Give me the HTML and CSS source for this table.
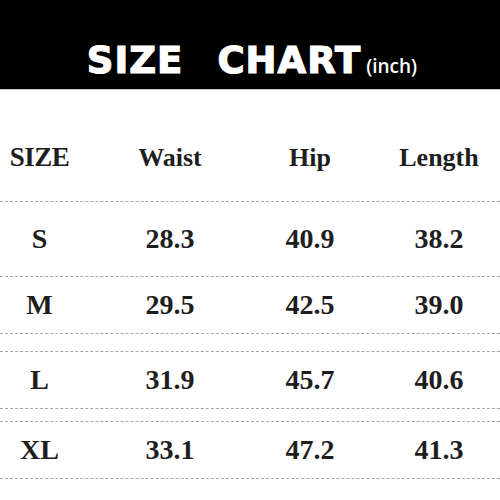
FILE: index.html
```html
<!DOCTYPE html>
<html>
<head>
<meta charset="utf-8">
<link rel="stylesheet" href="styles.css">
</head>
<body>
<div class="page">
  <header class="banner">
    <span class="title">SIZE</span>
    <span class="title title-2">CHART</span>
    <span class="unit">(inch)</span>
  </header>
  <div class="rule-top"></div>
  <div class="table">
    <div class="row head">
      <div class="cell first">SIZE</div>
      <div class="cell">Waist</div>
      <div class="cell">Hip</div>
      <div class="cell">Length</div>
    </div>
    <div class="row r-s">
      <div class="cell first">S</div>
      <div class="cell">28.3</div>
      <div class="cell">40.9</div>
      <div class="cell">38.2</div>
    </div>
    <div class="row r-m">
      <div class="cell first">M</div>
      <div class="cell">29.5</div>
      <div class="cell">42.5</div>
      <div class="cell">39.0</div>
    </div>
    <div class="spacer s1"></div>
    <div class="row r-l">
      <div class="cell first">L</div>
      <div class="cell">31.9</div>
      <div class="cell">45.7</div>
      <div class="cell">40.6</div>
    </div>
    <div class="spacer s2"></div>
    <div class="row r-xl">
      <div class="cell first">XL</div>
      <div class="cell">33.1</div>
      <div class="cell">47.2</div>
      <div class="cell">41.3</div>
    </div>
  </div>
</div>
</body>
</html>
```

FILE: styles.css
```css
html, body {
  margin: 0;
  padding: 0;
  background: #fff;
}
.page {
  width: 500px;
  height: 500px;
  overflow: hidden;
  background: #fff;
}
.banner {
  height: 89px;
  background: #000;
  display: flex;
  justify-content: center;
  align-items: baseline;
  box-sizing: border-box;
  padding-top: 42px;
  padding-left: 4px;
  color: #fff;
  font-family: "DejaVu Sans", sans-serif;
}
.title {
  font-size: 37px;
  font-weight: 700;
  line-height: 37px;
  letter-spacing: 1px;
  -webkit-text-stroke: 1.2px #fff;
}
.title-2 {
  margin-left: 34px;
}
.unit {
  font-family: "Open Sans", sans-serif;
  font-size: 19px;
  font-weight: 600;
  margin-left: 5px;
}
.rule-top {
  height: 1px;
  background: #c8c8c8;
}
.table {
  font-family: "Liberation Serif", serif;
  font-weight: 700;
  color: #1e1e1e;
}
.row {
  display: grid;
  grid-template-columns: 78px 144px 96px 122px;
  column-gap: 20px;
  align-items: center;
  border-bottom: 1px dashed #a8a8a8;
  box-sizing: border-box;
  font-size: 28px;
}
.cell {
  text-align: center;
}
.first {
  padding-left: 1px;
}
.head {
  height: 112px;
  font-size: 26px;
  padding-top: 24px;
}
.head .first {
  font-size: 27px;
  letter-spacing: -0.5px;
}
.r-s { height: 75px; }
.r-m { height: 57px; }
.r-l { height: 57px; }
.r-xl { height: 57px; }
.s1 {
  height: 18px;
  border-bottom: 1px dashed #a8a8a8;
  box-sizing: border-box;
}
.s2 {
  height: 13px;
  border-bottom: 1px dashed #a8a8a8;
  box-sizing: border-box;
}
```
